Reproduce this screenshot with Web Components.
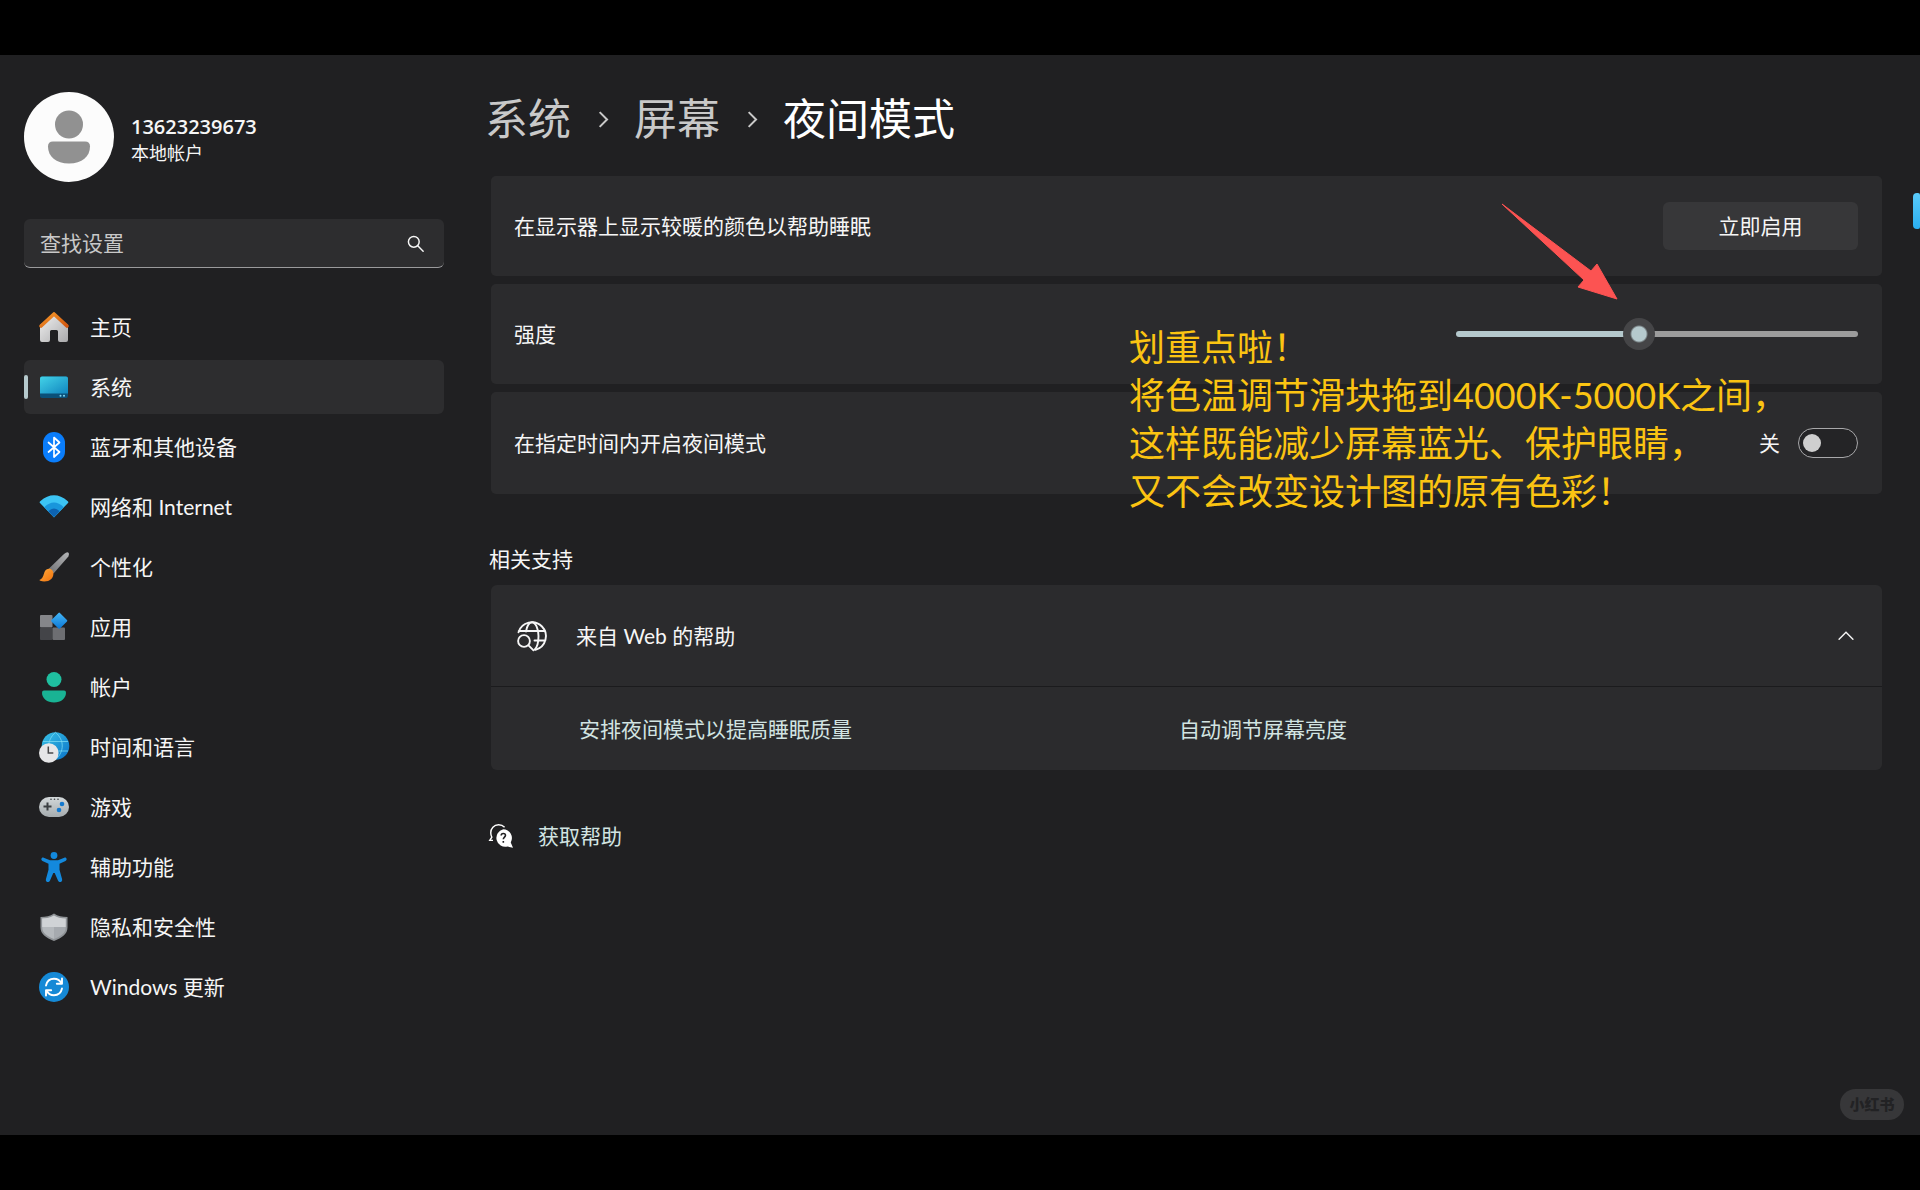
<!DOCTYPE html>
<html lang="zh-CN">
<head>
<meta charset="utf-8">
<meta name="viewport" content="width=device-width, initial-scale=1">
<title>设置 - 夜间模式</title>
<style>
  html, body {
    margin: 0;
    min-height: 100vh;
    background: #000;
  }
  body {
    box-sizing: border-box;
    padding: 55px 0;
    display: flex;
    --surface: #2b2b2d;
    --accent: #b5c9cd;
    --link: #d2e4e2;
    color: #f6f6f6;
    font: 21px/28px Lato, "Noto Sans CJK SC", sans-serif;
  }
</style>
</head>
<body>
<settings-app></settings-app>

<script>
// icons are all drawn on a 30x30 grid
const ICONS = {
  home: `
    <defs>
      <linearGradient id="w" x1="0" y1="0" x2="1" y2="1"><stop offset="0" stop-color="#f2f2f2"/><stop offset="1" stop-color="#a9a9ab"/></linearGradient>
      <linearGradient id="r" x1="0" y1="0" x2="1" y2="1"><stop offset="0" stop-color="#f69a2b"/><stop offset="1" stop-color="#d2560f"/></linearGradient>
    </defs>
    <path fill="url(#w)" d="M1 13 15 2l14 11v15a2 2 0 0 1-2 2h-6a2 2 0 0 1-2-2v-8.500a1.500 1.500 0 0 0-1.500-1.500h-5a1.500 1.500 0 0 0-1.500 1.500V28a2 2 0 0 1-2 2H3a2 2 0 0 1-2-2z"/>
    <path fill="none" stroke="url(#r)" stroke-width="3.600" stroke-linecap="round" stroke-linejoin="round" d="M2 14 15 2l13 12"/>`,
  system: `
    <defs><linearGradient id="s" x1="0" y1="0" x2="1" y2="1"><stop offset="0" stop-color="#43d3e8"/><stop offset="1" stop-color="#1186bf"/></linearGradient></defs>
    <rect x="1" y="4.500" width="28" height="21.500" rx="2" fill="#0b5078"/>
    <path fill="url(#s)" d="M3 4.500h24a2 2 0 0 1 2 2v15H1v-15a2 2 0 0 1 2-2z"/>
    <circle cx="21.500" cy="23.700" r="1" fill="#7fd6f2"/><circle cx="25" cy="23.700" r="1" fill="#7fd6f2"/>`,
  bluetooth: `
    <rect x="4" y="0" width="22" height="30.500" rx="11" fill="#0a7dfb"/>
    <path fill="none" stroke="#fff" stroke-width="1.700" stroke-linejoin="round" stroke-linecap="round" d="M9.500 10.500 20.500 20 15 25V5.500l5.500 5L9.500 20"/>`,
  network: `
    <path fill="#3cc4f4" d="M1 11Q.2 10 1.200 9.200Q15-2.500 28.800 9.200Q29.800 10 29 11L15 25.500z"/>
    <path fill="#1996dc" d="M5.300 15.200Q15 6 24.700 15.200L15 25z"/>
    <path fill="#0d62b0" d="M9.300 19.300Q15 13.500 20.700 19.300L16 24.300q-1 1-2 0z"/>`,
  brush: `
    <defs>
      <linearGradient id="h" x1="0" y1="1" x2="1" y2="0"><stop offset="0" stop-color="#707174"/><stop offset="1" stop-color="#b4b5b7"/></linearGradient>
      <linearGradient id="o" x1="0" y1="0" x2="1" y2="1"><stop offset="0" stop-color="#ffab3c"/><stop offset="1" stop-color="#f0720e"/></linearGradient>
    </defs>
    <path fill="url(#h)" d="M9.500 17 25 2q3-2.500 4.500-1.300 1.300 1.800-1 4.800L14.500 21.500z"/>
    <path fill="url(#o)" d="M5.500 20c1.500-3.500 5.500-4 7.500-2s2 6-.5 8.700C9.500 30 4 29.800 1.300 28.800c-1-.4-1-1 0-1.300C3.800 26.500 4.500 23 5.500 20z"/>`,
  apps: `
    <defs><linearGradient id="d" x1="0" y1="0" x2="1" y2="1"><stop offset="0" stop-color="#45b7f7"/><stop offset="1" stop-color="#0a76d4"/></linearGradient></defs>
    <rect x="1" y="3" width="12.500" height="12.500" rx="1" fill="#85868a"/>
    <rect x="1" y="15.500" width="12.500" height="12.500" rx="1" fill="#434448"/>
    <rect x="13.500" y="15.500" width="12.500" height="12.500" rx="1" fill="#6d6e72"/>
    <rect x="14.200" y="2.700" width="12" height="12" rx="1" fill="url(#d)" transform="rotate(45 20.200 8.700)"/>`,
  account: `
    <circle cx="15" cy="7.500" r="7.500" fill="#1fbfa0"/>
    <path fill="#19b394" d="M5 18.500h20q2 0 2 2c0 6-5 10-12 10S3 26.500 3 20.500q0-2 2-2z"/>`,
  time: `
    <defs><linearGradient id="g" x1="0" y1="0" x2="1" y2="1"><stop offset="0" stop-color="#39c3e6"/><stop offset="1" stop-color="#0a72c8"/></linearGradient></defs>
    <circle cx="16.500" cy="14" r="13.800" fill="url(#g)"/>
    <path fill="none" stroke="#7fdcf3" stroke-width="1" opacity=".75" d="M4 9.500h25M17 19h12M16.500.3c-9 8-9 19 0 27.500M16.500.3c9 8 9 19 0 27.500"/>
    <circle cx="9.800" cy="21" r="9.800" fill="#e6e6e8"/>
    <path fill="none" stroke="#4a4a4c" stroke-width="1.500" d="M9.300 14.500v6.500h5"/>`,
  game: `
    <defs><linearGradient id="p" x1="0" y1="0" x2="0" y2="1"><stop offset="0" stop-color="#d3d8da"/><stop offset="1" stop-color="#a5abae"/></linearGradient></defs>
    <rect x="0" y="5" width="30" height="20" rx="10" fill="url(#p)"/>
    <path stroke="#3b3f42" stroke-width="2" d="M8.500 10.500v8M4.500 14.500h8"/>
    <circle cx="23" cy="12" r="2.300" fill="#1379cf"/><circle cx="20" cy="18" r="2.300" fill="#1379cf"/>
    <circle cx="12" cy="7.300" r=".8" fill="#3b3f42"/><circle cx="15.500" cy="7.300" r=".8" fill="#3b3f42"/><circle cx="19" cy="7.300" r=".8" fill="#3b3f42"/>`,
  access: `
    <g fill="#1389dd"><circle cx="15" cy="3.500" r="3.400"/>
    <path d="M4.700 5.700 11 8.200h8l6.300-2.500c2.500-.7 3.200 2.500 1.200 3.400L20.500 11.700v6l2.600 9.500c.7 2.900-2.900 4-4 1.500L15.700 21h-1.400l-3.400 7.700c-1.100 2.500-4.700 1.400-4-1.500l2.600-9.500v-6L3.500 9.100c-2-.9-1.300-4.100 1.200-3.400z"/></g>`,
  shield: `
    <path fill="#8f9397" d="M15 1.500c4 2.700 8 3.500 13.500 3.500v10.500c0 6.500-5.500 10.500-13.500 13.500C7 26 1.500 22 1.500 15.500V5C7 5 11 4.200 15 1.500z"/>
    <path fill="#b5b9bd" d="M15 3.500V27c-7-2.700-11.800-6-11.800-11.500V6.500C8 6.500 12 5.500 15 3.500z"/>
    <path fill="#d0d3d6" d="M15 3.500c3 2 7 3 11.800 3V15H3.200V6.500C8 6.500 12 5.500 15 3.500z"/>
    <path fill="#a6aaaf" d="M15 15h11.800c0 6-4.800 9.300-11.800 12z"/>`,
  update: `
    <circle cx="15" cy="15" r="15" fill="#1589d6"/>
    <g fill="none" stroke="#fff" stroke-width="1.900" stroke-linecap="round" stroke-linejoin="round">
    <path d="M7 13.500C8 9 11.500 6.800 15 6.800c3.500 0 6 1.700 7.600 4.700M23 6.500v5.200h-5.200"/>
    <path d="M23 16.500c-1 4.500-4.500 6.700-8 6.700-3.500 0-6-1.700-7.600-4.700M7 23.500v-5.200h5.200"/></g>`,
  search: `
    <g fill="none" stroke="currentColor" stroke-width="2.600" stroke-linecap="round"><circle cx="12" cy="12" r="9.500"/><path d="m19 19 9.500 9.500"/></g>`,
  chevron: `
    <path fill="none" stroke="currentColor" stroke-width="3.600" d="m10 2 13 13-13 13"/>`,
  up: `
    <path fill="none" stroke="currentColor" stroke-width="2.600" stroke-linecap="round" d="m2 21 13-13 13 13"/>`,
  web: `
    <g fill="none" stroke="currentColor" stroke-width="1.900" stroke-linecap="round">
    <path d="M1.500 11.300A14 14 0 1 1 18.500 28.800M1.800 10h26.400M17.500 19.500h10.800"/>
    <path d="M9 10.500C10 5 12.500 1.200 15 1.200c3.500 0 6.500 6.500 6.500 13.800 0 6-1.300 11-3.700 13.500"/>
    <circle cx="7" cy="20" r="5.900"/><path d="m11.500 24.300 5 5"/></g>`,
  help: `
    <path fill="none" stroke="currentColor" stroke-width="1.800" d="M19.500 4C17.500 2 15 1 12 1 6 1 2.200 5.500 2.200 11c0 2.500.5 4 1.300 5.500L1 20.500h4"/>
    <path fill="currentColor" d="M17.800 6.500a11 11 0 0 1 9.400 16.500L30 29.700l-7-1.500A11 11 0 1 1 17.800 6.500z"/>
    <path fill="none" stroke="#202022" stroke-width="2" d="M15.200 14.500c0-3.400 5.400-3.400 5.400-.3 0 2.100-2.700 2.300-2.700 5M17.900 21.200v2.300"/>`
};

const NAV = [
  ['home', '主页'],
  ['system', '系统'],
  ['bluetooth', '蓝牙和其他设备'],
  ['network', '网络和 Internet'],
  ['brush', '个性化'],
  ['apps', '应用'],
  ['account', '帐户'],
  ['time', '时间和语言'],
  ['game', '游戏'],
  ['access', '辅助功能'],
  ['shield', '隐私和安全性'],
  ['update', 'Windows 更新']
];

class BaseElement extends HTMLElement {
  connectedCallback() {
    if (this.shadowRoot) return;
    this.attachShadow({ mode: 'open' });
    this.shadowRoot.innerHTML = this.render();
    this.ready();
  }

  ready() {}
}

class UiIcon extends BaseElement {
  render() {
    return `
      <style>
        :host { display: block; flex: none; width: 30px; height: 30px; }
        svg { display: block; width: 100%; height: 100%; overflow: visible; }
      </style>
      <svg viewBox="0 0 30 30" aria-hidden="true">${ICONS[this.getAttribute('name')]}</svg>
    `;
  }
}

class UserCard extends BaseElement {
  render() {
    return `
      <style>
        :host { display: flex; align-items: center; gap: 17px; }
        svg { width: 90px; height: 90px; }
        div { padding-top: 5px; }
        strong {
          display: block;
          font: 600 20px/26px "Open Sans", sans-serif;
        }
        span { display: block; font-size: 18px; line-height: 26px; }
      </style>
      <svg viewBox="0 0 90 90" aria-hidden="true">
        <circle cx="45" cy="45" r="45" fill="#fcfcfc"/>
        <circle cx="45" cy="32.500" r="14" fill="#919191"/>
        <path fill="#919191" d="M29 49.500h32q5 0 5 5c0 10-8 17-21 17s-21-7-21-17q0-5 5-5z"/>
      </svg>
      <div>
        <strong><slot name="name"></slot></strong>
        <span><slot name="kind"></slot></span>
      </div>
    `;
  }
}

class SearchBox extends BaseElement {
  render() {
    return `
      <style>
        :host { display: block; }
        div {
          box-sizing: border-box;
          display: flex;
          align-items: center;
          height: 49px;
          padding: 0 20px 0 16px;
          border-radius: 6px;
          border-bottom: 1px solid #9a9a9c;
          background: #2d2d2f;
        }
        input {
          flex: 1;
          min-width: 0;
          padding: 0;
          border: 0;
          outline: none;
          background: none;
          color: inherit;
          font: inherit;
        }
        input::placeholder { color: #c8c8c8; opacity: 1; }
        ui-icon { width: 17px; height: 17px; }
      </style>
      <div>
        <input type="search" aria-label="查找设置" placeholder="查找设置">
        <ui-icon name="search"></ui-icon>
      </div>
    `;
  }
}

class NavItem extends BaseElement {
  render() {
    return `
      <style>
        :host { display: block; }
        a {
          position: relative;
          display: flex;
          align-items: center;
          gap: 21px;
          height: 54px;
          padding-left: 15px;
          border-radius: 6px;
          color: inherit;
          text-decoration: none;
        }
        :host([active]) a { background: #2d2d2f; }
        :host([active]) a::before {
          content: "";
          position: absolute;
          left: 0;
          top: 15px;
          width: 4px;
          height: 24px;
          border-radius: 2px;
          background: var(--accent);
        }
      </style>
      <a href="#${this.getAttribute('icon')}">
        <ui-icon name="${this.getAttribute('icon')}"></ui-icon>
        <span><slot></slot></span>
      </a>
    `;
  }
}

class BreadCrumb extends BaseElement {
  render() {
    return `
      <style>
        :host { display: block; }
        nav {
          display: flex;
          align-items: center;
          gap: 23px;
          font-size: 43px;
          line-height: 60px;
        }
        a { color: #c9c9c9; text-decoration: none; }
        h1 { margin: 0; font: inherit; color: #fff; }
        ui-icon { width: 17px; height: 17px; color: #c9c9c9; }
      </style>
      <nav aria-label="路径">
        <a href="#system">系统</a>
        <ui-icon name="chevron"></ui-icon>
        <a href="#display">屏幕</a>
        <ui-icon name="chevron"></ui-icon>
        <h1>夜间模式</h1>
      </nav>
    `;
  }
}

class SettingCard extends BaseElement {
  render() {
    return `
      <style>
        :host {
          display: flex;
          align-items: center;
          justify-content: space-between;
          min-height: 100px;
          padding: 0 24px 0 23px;
          border-radius: 5px;
          background: var(--surface);
        }
      </style>
      <span>${this.getAttribute('label')}</span>
      <slot></slot>
    `;
  }
}

class ActionButton extends BaseElement {
  render() {
    return `
      <style>
        :host { display: block; }
        button {
          width: 195px;
          height: 48px;
          padding: 0;
          border: 0;
          border-radius: 6px;
          background: #373739;
          color: inherit;
          font: inherit;
        }
      </style>
      <button type="button"><slot></slot></button>
    `;
  }
}

class RangeSlider extends BaseElement {
  render() {
    return `
      <style>
        :host { display: block; width: 402px; }
        input {
          --pos: calc(16px + (100% - 32px) * var(--ratio));
          appearance: none;
          display: block;
          width: 100%;
          height: 6px;
          margin: 0;
          border-radius: 3px;
          background: linear-gradient(to right, var(--accent) var(--pos), #9c9c9c var(--pos));
        }
        input::-webkit-slider-runnable-track { height: 6px; }
        input::-webkit-slider-thumb {
          appearance: none;
          width: 32px;
          height: 32px;
          margin-top: -13px;
          border-radius: 50%;
          background: radial-gradient(circle, var(--accent) 7px, #454547 9px);
        }
      </style>
      <input type="range" min="0" max="100" value="${this.getAttribute('value')}" aria-label="${this.getAttribute('label')}">
    `;
  }

  ready() {
    const input = this.shadowRoot.querySelector('input');
    const update = () => input.style.setProperty('--ratio', input.value / 100);
    input.addEventListener('input', update);
    update();
  }
}

class ToggleSwitch extends BaseElement {
  render() {
    return `
      <style>
        label { display: flex; align-items: center; gap: 18px; }
        input {
          appearance: none;
          box-sizing: border-box;
          display: flex;
          align-items: center;
          width: 60px;
          height: 30px;
          margin: 0;
          padding: 0 4px;
          border: 1px solid #a8a8aa;
          border-radius: 15px;
          background: #242426;
        }
        input::before {
          content: "";
          width: 18px;
          height: 18px;
          border-radius: 50%;
          background: #cfcfcf;
        }
        input:checked { justify-content: flex-end; background: var(--accent); }
      </style>
      <label><span>关</span><input type="checkbox" role="switch"></label>
    `;
  }

  ready() {
    const text = this.shadowRoot.querySelector('span');
    this.shadowRoot.querySelector('input').addEventListener('change', (e) => {
      text.textContent = e.target.checked ? '开' : '关';
    });
  }
}

class HelpPanel extends BaseElement {
  render() {
    return `
      <style>
        :host {
          display: block;
          border-radius: 6px;
          background: var(--surface);
          overflow: hidden;
        }
        button {
          display: flex;
          align-items: center;
          gap: 29px;
          width: 100%;
          height: 101px;
          padding: 0 28px 0 26px;
          border: 0;
          background: none;
          color: inherit;
          font: inherit;
          text-align: left;
        }
        button span { flex: 1; }
        .up { width: 16px; height: 16px; }
        .links {
          display: grid;
          grid-template-columns: 1fr 1fr;
          align-items: center;
          height: 83px;
          padding: 0 103px 0 88px;
          border-top: 1px solid #1b1b1d;
        }
        .links[hidden] { display: none; }
      </style>
      <button type="button" aria-expanded="true">
        <ui-icon name="web"></ui-icon>
        <span>${this.getAttribute('label')}</span>
        <ui-icon class="up" name="up"></ui-icon>
      </button>
      <div class="links"><slot></slot></div>
    `;
  }

  ready() {
    const button = this.shadowRoot.querySelector('button');
    const links = this.shadowRoot.querySelector('.links');
    button.addEventListener('click', () => {
      links.hidden = !links.hidden;
      button.setAttribute('aria-expanded', String(!links.hidden));
    });
  }
}

// tip text and arrow on top of the cards
class TipNote extends BaseElement {
  render() {
    return `
      <style>
        :host { position: absolute; inset: 0; pointer-events: none; }
        p {
          position: absolute;
          top: 147px;
          right: 109px;
          width: 644px;
          margin: 0;
          color: #fbc412;
          font-size: 36px;
          line-height: 48px;
          white-space: nowrap;
        }
        svg {
          position: absolute;
          top: 27px;
          right: 264px;
          width: 117px;
          height: 97px;
        }
      </style>
      <svg viewBox="0 0 117 97" aria-hidden="true">
        <path fill="#fc5352" stroke="#fc5352" stroke-linejoin="round" d="M1 1 90 68 96 61 116 96 77 84 83 77z"/>
      </svg>
      <p><slot></slot></p>
    `;
  }
}

class SettingsApp extends BaseElement {
  render() {
    const items = NAV.map(([icon, label]) =>
      `<nav-item icon="${icon}" ${icon === 'system' ? 'active' : ''}>${label}</nav-item>`).join('');

    return `
      <style>
        :host {
          position: relative;
          box-sizing: border-box;
          flex: 1;
          display: flex;
          gap: 47px;
          min-width: 0;
          padding: 0 38px 0 24px;
          background: #202022;
          overflow: hidden;
        }
        aside { flex: none; width: 420px; padding-top: 37px; }
        search-box { margin-top: 37px; }
        aside nav { display: grid; gap: 6px; margin-top: 32px; }
        main { flex: 1; min-width: 0; padding-top: 34px; }
        bread-crumb { margin-left: -6px; }
        .cards { position: relative; display: grid; gap: 8px; margin-top: 27px; }
        setting-card:last-of-type { min-height: 102px; }
        h2 { margin: 51px 0 12px -2px; font: inherit; }
        a { color: var(--link); text-decoration: none; }
        .get-help {
          display: inline-flex;
          align-items: center;
          gap: 25px;
          margin: 52px 0 0 -2px;
        }
        .get-help ui-icon { width: 24px; height: 24px; color: #fff; }
        .edge {
          position: absolute;
          top: 138px;
          right: 0;
          width: 7px;
          height: 36px;
          border-radius: 4px 2px 2px 4px;
          background: linear-gradient(#5acbfa, #2aaef0);
        }
        .mark {
          position: absolute;
          right: 16px;
          bottom: 15px;
          width: 64px;
          border-radius: 16px;
          background: #373739;
          color: #222224;
          font-size: 15px;
          line-height: 31px;
          font-weight: 900;
          text-align: center;
        }
      </style>
      <aside>
        <user-card>
          <span slot="name">13623239673</span>
          <span slot="kind">本地帐户</span>
        </user-card>
        <search-box></search-box>
        <nav aria-label="设置">${items}</nav>
      </aside>
      <main>
        <bread-crumb></bread-crumb>
        <div class="cards">
          <setting-card label="在显示器上显示较暖的颜色以帮助睡眠">
            <action-button>立即启用</action-button>
          </setting-card>
          <setting-card label="强度">
            <range-slider value="45" label="强度"></range-slider>
          </setting-card>
          <setting-card label="在指定时间内开启夜间模式">
            <toggle-switch></toggle-switch>
          </setting-card>
          <tip-note>划重点啦！<br>将色温调节滑块拖到4000K-5000K之间，<br>这样既能减少屏幕蓝光、保护眼睛，<br>又不会改变设计图的原有色彩！</tip-note>
        </div>
        <h2>相关支持</h2>
        <help-panel label="来自 Web 的帮助">
          <a href="#schedule">安排夜间模式以提高睡眠质量</a>
          <a href="#brightness">自动调节屏幕亮度</a>
        </help-panel>
        <a class="get-help" href="#help"><ui-icon name="help"></ui-icon>获取帮助</a>
      </main>
      <div class="edge"></div>
      <div class="mark">小红书</div>
    `;
  }
}

customElements.define('ui-icon', UiIcon);
customElements.define('user-card', UserCard);
customElements.define('search-box', SearchBox);
customElements.define('nav-item', NavItem);
customElements.define('bread-crumb', BreadCrumb);
customElements.define('setting-card', SettingCard);
customElements.define('action-button', ActionButton);
customElements.define('range-slider', RangeSlider);
customElements.define('toggle-switch', ToggleSwitch);
customElements.define('help-panel', HelpPanel);
customElements.define('tip-note', TipNote);
customElements.define('settings-app', SettingsApp);
</script>
</body>
</html>
